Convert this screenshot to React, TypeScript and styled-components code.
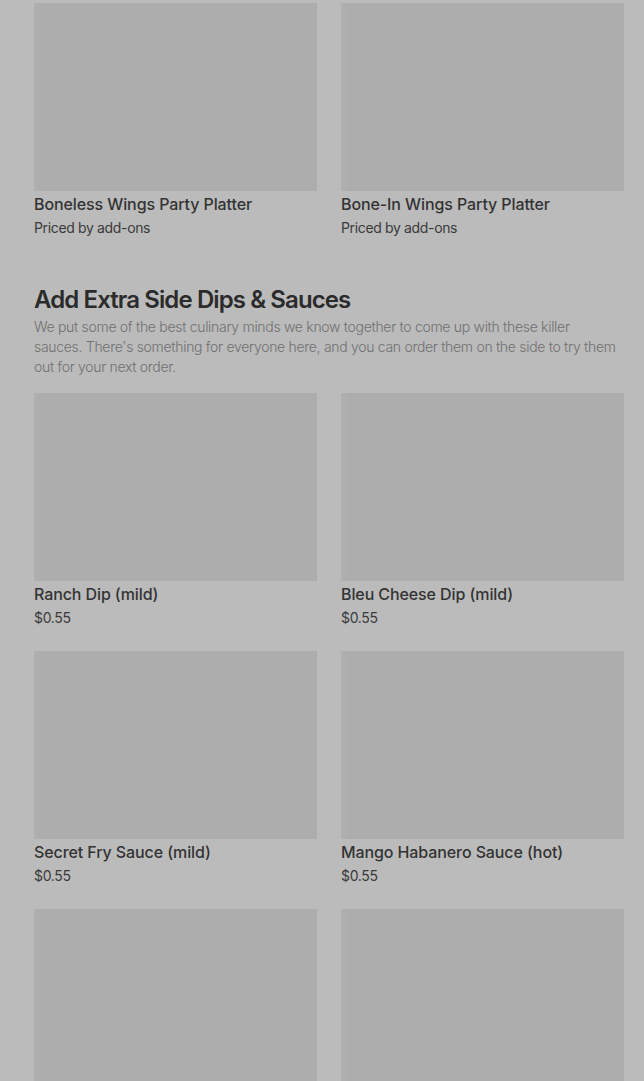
import React from "react";
import styled, { createGlobalStyle } from "styled-components";

const Global = createGlobalStyle`
  html, body { margin: 0; padding: 0; background: #bbbbbb; }
  body { font-family: Inter, "Liberation Sans", sans-serif; color: #333333; }
`;

const Page = styled.div`
  padding: 3px 20px 0 34px;
  display: flex;
  flex-direction: column;
`;

const Grid = styled.div`
  display: grid;
  grid-template-columns: 283px 283px;
  column-gap: 24px;
  row-gap: 23px;
`;

const Card = styled.div`
  display: flex;
  flex-direction: column;
`;

const Thumb = styled.div`
  height: 188px;
  background: #adadad;
  background-image: linear-gradient(90deg, #b0b0b0 0px, #adadad 8px);
`;

const ItemTitle = styled.div`
  margin-top: 1px;
  font-size: 16px;
  font-weight: 500;
  line-height: 24px;
  color: #333333;
  letter-spacing: -0.1px;
`;

const ItemSub = styled.div`
  font-size: 14px;
  line-height: 20px;
  color: #3a3a3a;
  margin-top: 2px;
  letter-spacing: -0.35px;
`;

const Section = styled.section`
  margin-top: 46px;
  display: flex;
  flex-direction: column;
`;

const Heading = styled.h2`
  margin: 0;
  font-size: 24px;
  line-height: 32px;
  font-weight: 600;
  letter-spacing: -0.9px;
  color: #2b2b2b;
`;

const Desc = styled.p`
  margin: 1px 0 16px;
  font-size: 14px;
  line-height: 20px;
  font-weight: 300;
  color: #707070;
  letter-spacing: -0.3px;
`;

type Item = { name: string; sub: string };

const top: Item[] = [
  { name: "Boneless Wings Party Platter", sub: "Priced by add-ons" },
  { name: "Bone-In Wings Party Platter", sub: "Priced by add-ons" },
];

const dips: Item[] = [
  { name: "Ranch Dip (mild)", sub: "$0.55" },
  { name: "Bleu Cheese Dip (mild)", sub: "$0.55" },
  { name: "Secret Fry Sauce (mild)", sub: "$0.55" },
  { name: "Mango Habanero Sauce (hot)", sub: "$0.55" },
  { name: "", sub: "" },
  { name: "", sub: "" },
];

const ItemCard = ({ item }: { item: Item }) => (
  <Card>
    <Thumb />
    {item.name && <ItemTitle>{item.name}</ItemTitle>}
    {item.sub && <ItemSub>{item.sub}</ItemSub>}
  </Card>
);

export default function App() {
  return (
    <>
      <Global />
      <Page>
        <Grid>
          {top.map((it, i) => (
            <ItemCard key={i} item={it} />
          ))}
        </Grid>
        <Section>
          <Heading>Add Extra Side Dips &amp; Sauces</Heading>
          <Desc>
            We put some of the best culinary minds we know together to come up with these killer
            <br />
            sauces. There's something for everyone here, and you can order them on the side to try them
            <br />
            out for your next order.
          </Desc>
          <Grid>
            {dips.map((it, i) => (
              <ItemCard key={i} item={it} />
            ))}
          </Grid>
        </Section>
      </Page>
    </>
  );
}
